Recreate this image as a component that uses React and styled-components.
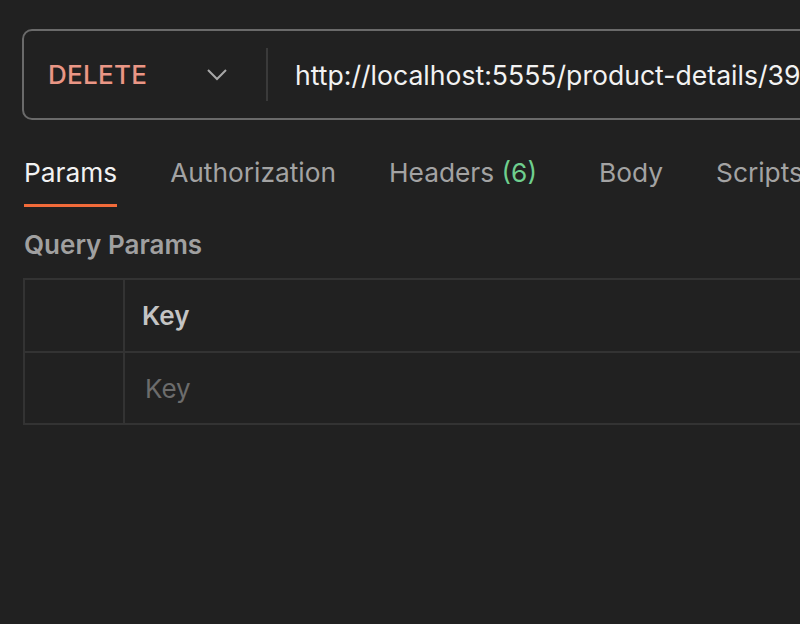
import React from 'react'
import styled, { createGlobalStyle } from 'styled-components'

const GlobalStyle = createGlobalStyle`
    html, body {
        margin: 0;
        padding: 0;
        background: #212121;
        overflow: hidden;
    }
    body {
        font-family: Inter, 'Noto Sans', sans-serif;
        color: #e6e6e6;
    }
`;

const Page = styled.div`
    width: 800px;
    height: 624px;
    padding: 29px 0 0 22px;
    box-sizing: border-box;
    overflow: hidden;
`;

const UrlBar = styled.div`
    display: flex;
    align-items: center;
    width: 900px;
    height: 91px;
    box-sizing: border-box;
    border: 2px solid #6a6a6a;
    border-radius: 10px;
`;

const MethodSelect = styled.div`
    display: flex;
    align-items: center;
    width: 242px;
    box-sizing: border-box;
    padding-left: 24px;
    height: 100%;
`;

const MethodLabel = styled.span`
    color: #ea9685;
    font-size: 26px;
    font-weight: 500;
    letter-spacing: 0.3px;
    flex: 1;
`;

const Chevron = styled.svg`
    width: 22px;
    height: 14px;
    margin-right: 38px;
`;

const Divider = styled.div`
    width: 2px;
    height: 53px;
    background: #3a3a3a;
`;

const UrlText = styled.span`
    margin-left: 27px;
    font-size: 26.6px;
    color: #f2f2f2;
    white-space: nowrap;
`;

const Tabs = styled.div`
    display: flex;
    gap: 53px;
    margin-top: 37px;
    padding-left: 2px;
    white-space: nowrap;
`;

const Tab = styled.div`
    font-size: 26.3px;
    color: ${p => (p.active ? '#f2f2f2' : '#a3a3a3')};
    padding-bottom: 16px;
    margin-right: ${p => p.extra || 0}px;
    border-bottom: 3px solid ${p => (p.active ? '#f26b3a' : 'transparent')};
`;

const Count = styled.span`
    color: #6fcf8e;
`;

const SectionTitle = styled.div`
    margin-top: 22px;
    padding-left: 2px;
    font-size: 26px;
    font-weight: 600;
    color: #a0a0a0;
`;

const Table = styled.div`
    margin-top: 18px;
    margin-left: 1px;
    width: 900px;
    border: 2px solid #333333;
    border-right: none;
`;

const Row = styled.div`
    display: grid;
    grid-template-columns: 98px 1fr;
    height: ${p => p.h}px;
    border-top: ${p => (p.first ? 'none' : '2px solid #333333')};
    box-sizing: border-box;
`;

const Cell = styled.div`
    display: flex;
    align-items: center;
    padding-left: ${p => p.pad || 0}px;
    border-left: ${p => (p.divider ? '2px solid #333333' : 'none')};
    font-size: 26px;
    font-weight: ${p => (p.head ? 600 : 400)};
    color: ${p => (p.head ? '#c4c4c4' : '#6c6c6c')};
`;

const App = () => (
    <>
        <GlobalStyle />
        <Page>
            <UrlBar>
                <MethodSelect>
                    <MethodLabel>DELETE</MethodLabel>
                    <Chevron viewBox="0 0 22 14">
                        <path d="M2 2 L11 11 L20 2" fill="none" stroke="#a8a8a8" strokeWidth="2" />
                    </Chevron>
                </MethodSelect>
                <Divider />
                <UrlText>http://localhost:5555/product-details/39</UrlText>
            </UrlBar>
            <Tabs>
                <Tab active>Params</Tab>
                <Tab>Authorization</Tab>
                <Tab extra={9}>Headers <Count>(6)</Count></Tab>
                <Tab>Body</Tab>
                <Tab>Scripts</Tab>
            </Tabs>
            <SectionTitle>Query Params</SectionTitle>
            <Table>
                <Row h={71} first>
                    <Cell />
                    <Cell divider pad={17} head>Key</Cell>
                </Row>
                <Row h={72}>
                    <Cell />
                    <Cell divider pad={20}>Key</Cell>
                </Row>
            </Table>
        </Page>
    </>
)

export default App
